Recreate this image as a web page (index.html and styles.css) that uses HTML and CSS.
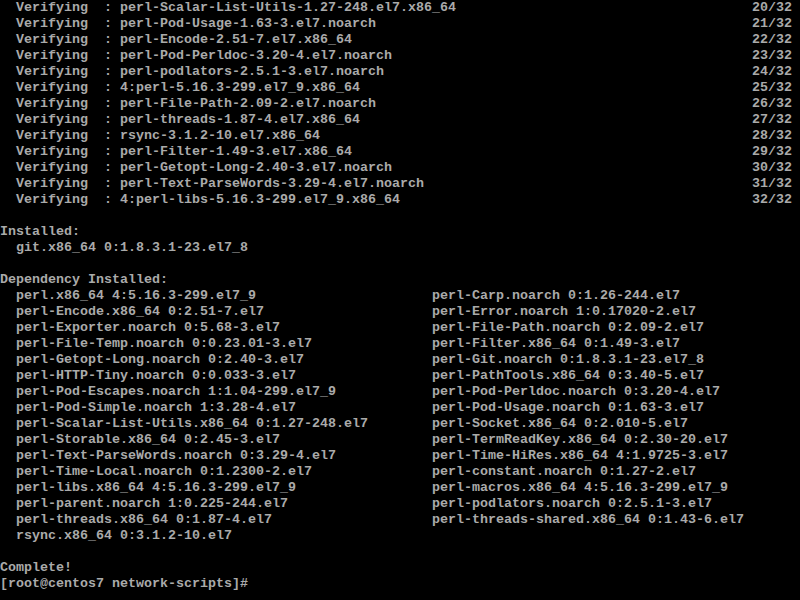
FILE: index.html
```html
<!DOCTYPE html>
<html>
<head>
<meta charset="utf-8">
<link rel="stylesheet" href="styles.css">
</head>
<body>
<div class="screen">
  <div class="vrow"><span>  Verifying  : perl-Scalar-List-Utils-1.27-248.el7.x86_64</span><span>20/32</span></div>
  <div class="vrow"><span>  Verifying  : perl-Pod-Usage-1.63-3.el7.noarch</span><span>21/32</span></div>
  <div class="vrow"><span>  Verifying  : perl-Encode-2.51-7.el7.x86_64</span><span>22/32</span></div>
  <div class="vrow"><span>  Verifying  : perl-Pod-Perldoc-3.20-4.el7.noarch</span><span>23/32</span></div>
  <div class="vrow"><span>  Verifying  : perl-podlators-2.5.1-3.el7.noarch</span><span>24/32</span></div>
  <div class="vrow"><span>  Verifying  : 4:perl-5.16.3-299.el7_9.x86_64</span><span>25/32</span></div>
  <div class="vrow"><span>  Verifying  : perl-File-Path-2.09-2.el7.noarch</span><span>26/32</span></div>
  <div class="vrow"><span>  Verifying  : perl-threads-1.87-4.el7.x86_64</span><span>27/32</span></div>
  <div class="vrow"><span>  Verifying  : rsync-3.1.2-10.el7.x86_64</span><span>28/32</span></div>
  <div class="vrow"><span>  Verifying  : perl-Filter-1.49-3.el7.x86_64</span><span>29/32</span></div>
  <div class="vrow"><span>  Verifying  : perl-Getopt-Long-2.40-3.el7.noarch</span><span>30/32</span></div>
  <div class="vrow"><span>  Verifying  : perl-Text-ParseWords-3.29-4.el7.noarch</span><span>31/32</span></div>
  <div class="vrow"><span>  Verifying  : 4:perl-libs-5.16.3-299.el7_9.x86_64</span><span>32/32</span></div>
  <div class="line"> </div>
  <div class="line">Installed:</div>
  <div class="line">  git.x86_64 0:1.8.3.1-23.el7_8</div>
  <div class="line"> </div>
  <div class="line">Dependency Installed:</div>
  <div class="drow"><span class="dcol">perl.x86_64 4:5.16.3-299.el7_9</span><span class="dcol2">perl-Carp.noarch 0:1.26-244.el7</span></div>
  <div class="drow"><span class="dcol">perl-Encode.x86_64 0:2.51-7.el7</span><span class="dcol2">perl-Error.noarch 1:0.17020-2.el7</span></div>
  <div class="drow"><span class="dcol">perl-Exporter.noarch 0:5.68-3.el7</span><span class="dcol2">perl-File-Path.noarch 0:2.09-2.el7</span></div>
  <div class="drow"><span class="dcol">perl-File-Temp.noarch 0:0.23.01-3.el7</span><span class="dcol2">perl-Filter.x86_64 0:1.49-3.el7</span></div>
  <div class="drow"><span class="dcol">perl-Getopt-Long.noarch 0:2.40-3.el7</span><span class="dcol2">perl-Git.noarch 0:1.8.3.1-23.el7_8</span></div>
  <div class="drow"><span class="dcol">perl-HTTP-Tiny.noarch 0:0.033-3.el7</span><span class="dcol2">perl-PathTools.x86_64 0:3.40-5.el7</span></div>
  <div class="drow"><span class="dcol">perl-Pod-Escapes.noarch 1:1.04-299.el7_9</span><span class="dcol2">perl-Pod-Perldoc.noarch 0:3.20-4.el7</span></div>
  <div class="drow"><span class="dcol">perl-Pod-Simple.noarch 1:3.28-4.el7</span><span class="dcol2">perl-Pod-Usage.noarch 0:1.63-3.el7</span></div>
  <div class="drow"><span class="dcol">perl-Scalar-List-Utils.x86_64 0:1.27-248.el7</span><span class="dcol2">perl-Socket.x86_64 0:2.010-5.el7</span></div>
  <div class="drow"><span class="dcol">perl-Storable.x86_64 0:2.45-3.el7</span><span class="dcol2">perl-TermReadKey.x86_64 0:2.30-20.el7</span></div>
  <div class="drow"><span class="dcol">perl-Text-ParseWords.noarch 0:3.29-4.el7</span><span class="dcol2">perl-Time-HiRes.x86_64 4:1.9725-3.el7</span></div>
  <div class="drow"><span class="dcol">perl-Time-Local.noarch 0:1.2300-2.el7</span><span class="dcol2">perl-constant.noarch 0:1.27-2.el7</span></div>
  <div class="drow"><span class="dcol">perl-libs.x86_64 4:5.16.3-299.el7_9</span><span class="dcol2">perl-macros.x86_64 4:5.16.3-299.el7_9</span></div>
  <div class="drow"><span class="dcol">perl-parent.noarch 1:0.225-244.el7</span><span class="dcol2">perl-podlators.noarch 0:2.5.1-3.el7</span></div>
  <div class="drow"><span class="dcol">perl-threads.x86_64 0:1.87-4.el7</span><span class="dcol2">perl-threads-shared.x86_64 0:1.43-6.el7</span></div>
  <div class="drow"><span class="dcol">rsync.x86_64 0:3.1.2-10.el7</span></div>
  <div class="line"> </div>
  <div class="line">Complete!</div>
  <div class="line">[root@centos7 network-scripts]#</div>
</div>
</body>
</html>
```
FILE: styles.css
```css
html, body {
  margin: 0;
  padding: 0;
  background: #000;
}
body {
  width: 800px;
  height: 600px;
  overflow: hidden;
}
.screen {
  font-family: "Liberation Mono", "DejaVu Sans Mono", monospace;
  font-size: 13.333px;
  font-weight: bold;
  line-height: 16px;
  color: #aaaaaa;
}
.line {
  height: 16px;
  white-space: pre;
}
.vrow {
  display: flex;
  justify-content: space-between;
  width: 792px;
  height: 16px;
  white-space: pre;
}
.drow {
  display: flex;
  height: 16px;
  padding-left: 16px;
  white-space: pre;
}
.dcol {
  flex: none;
  width: 416px;
}
.dcol2 {
  flex: none;
}
```
